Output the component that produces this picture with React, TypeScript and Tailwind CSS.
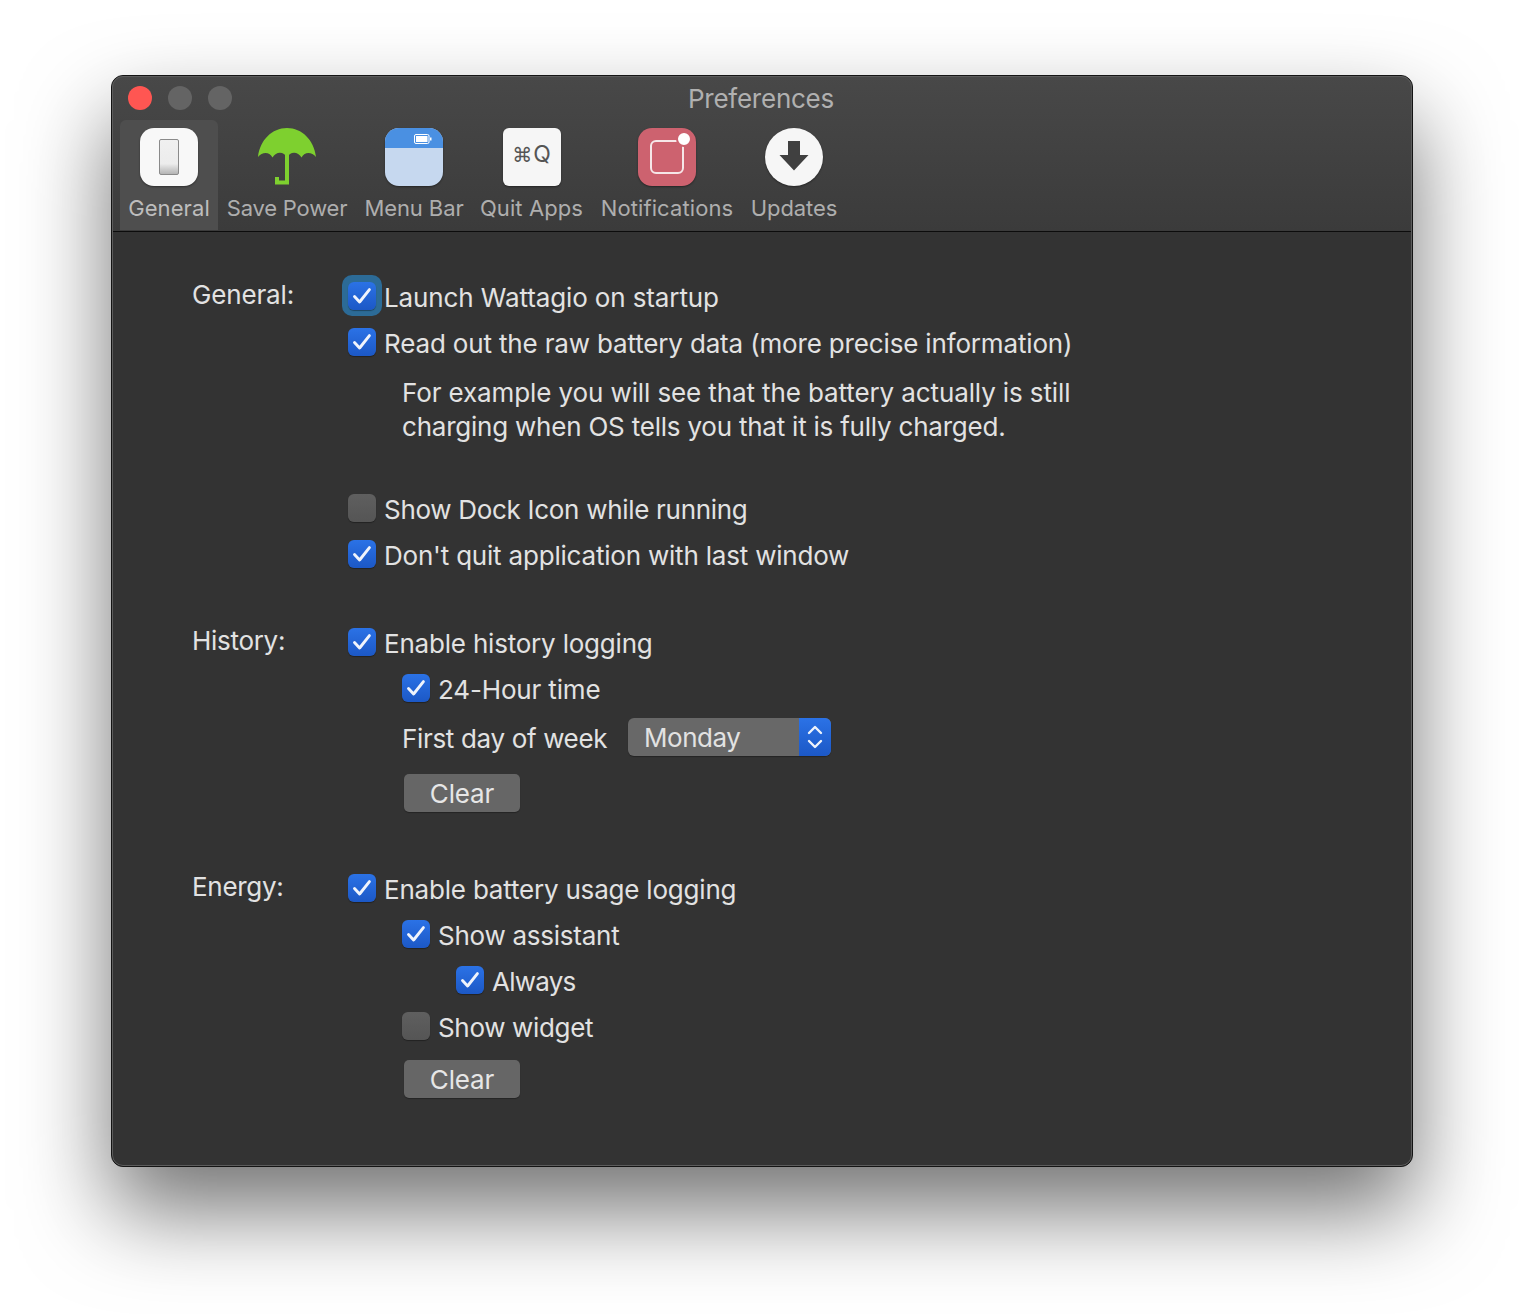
import React from "react";

const FONT = "font-['Inter','Liberation_Sans',sans-serif]";

function Check({ on, focus }: { on: boolean; focus?: boolean }) {
  return (
    <span className="relative mb-[2px] mr-2 block h-7 w-7 shrink-0">
      {focus && <span className="absolute -left-1.5 -top-[7px] h-[41px] w-10 rounded-[10px] bg-[#2c6b97]" />}
      {on ? (
        <span className="absolute inset-0 rounded-md bg-gradient-to-b from-[#2b72e6] to-[#1c58c6] shadow-[0_1px_1px_rgba(0,0,0,0.35)]">
          <svg viewBox="0 0 28 28" className="h-7 w-7" fill="none" stroke="#f0f4fc" strokeWidth="2.9" strokeLinecap="round" strokeLinejoin="round">
            <path d="M6.5 14.6 L11.6 20 L21.4 7.6" />
          </svg>
        </span>
      ) : (
        <span className="absolute inset-0 rounded-md bg-gradient-to-b from-[#5f5f5f] to-[#555555] shadow-[0_1px_1px_rgba(0,0,0,0.35)]" />
      )}
    </span>
  );
}

function Row({ text, on = true, level = 0, focus, track = "" }: { text: string; on?: boolean; level?: 0 | 1 | 2; focus?: boolean; track?: string }) {
  const indent = level === 0 ? "ml-0" : level === 1 ? "ml-[54px]" : "ml-[108px]";
  return (
    <div className={`flex h-[46px] items-center ${indent}`}>
      <Check on={on} focus={focus} />
      <span className={`relative whitespace-nowrap ${track}`}>{text}</span>
    </div>
  );
}

function GeneralIcon() {
  return (
    <div className="flex h-[58px] w-[58px] items-center justify-center rounded-[14px] bg-[#f8f8f8] shadow-[0_1px_2px_rgba(0,0,0,0.4)]">
      <div className="h-[36px] w-[20px] rounded-[2px] border border-[#8a8a8a] bg-gradient-to-b from-[#f0f0f0] from-0% via-[#ececec] via-70% to-[#b4b4b4] to-100%" />
    </div>
  );
}

function UmbrellaIcon() {
  return (
    <svg viewBox="0 0 58 58" className="h-[58px] w-[58px]">
      <path
        fill="#7ed02f"
        d="M0 29 C2 12 14 0 29 0 C44 0 56 12 58 29 C54 24 47 23 43.5 29.5 C40 23 32 23 29 29.5 C26 23 18 23 14.5 29.5 C11 23 4 24 0 29 Z"
      />
      <path fill="none" stroke="#7ed02f" strokeWidth="4" d="M29 26 V54.5 H19 V49" />
    </svg>
  );
}

function MenuBarIcon() {
  return (
    <div className="relative h-[58px] w-[58px] overflow-hidden rounded-[14px] bg-[#c6d8ef] shadow-[0_1px_2px_rgba(0,0,0,0.4)]">
      <div className="flex h-[20px] items-start justify-end bg-[#4a90e2] pr-[11px] pt-[6px]">
        <svg viewBox="0 0 18 10" className="h-[10px] w-[18px]">
          <rect x="0.5" y="0.5" width="14.5" height="9" rx="1.5" fill="none" stroke="#fff" />
          <rect x="2" y="2" width="11.5" height="6" fill="#fff" />
          <rect x="16" y="3.5" width="1.5" height="3" fill="#fff" />
        </svg>
      </div>
    </div>
  );
}

function QuitIcon() {
  return (
    <div className="flex h-[58px] w-[58px] items-center justify-center rounded-[6px] bg-[#f6f6f6] text-[23px] leading-none text-[#555555] shadow-[0_1px_2px_rgba(0,0,0,0.4)]">
      <span className="-mt-[6px] whitespace-nowrap">
        <span className="font-['DejaVu_Sans',sans-serif] text-[20px]">⌘</span>
        <span className="ml-[1px] font-['Inter',sans-serif]">Q</span>
      </span>
    </div>
  );
}

function NotifIcon() {
  return (
    <div className="relative h-[58px] w-[58px] rounded-[14px] bg-[#cd626f] shadow-[0_1px_2px_rgba(0,0,0,0.4)]">
      <div className="absolute left-[12px] top-[12px] h-[34px] w-[34px] rounded-[6px] border-2 border-[#f6e6e8]" />
      <div className="absolute left-[38px] top-[3px] h-4 w-4 rounded-full border-2 border-[#cd626f] bg-white" />
    </div>
  );
}

function UpdatesIcon() {
  return (
    <div className="h-[58px] w-[58px] rounded-full bg-[#f6f6f6] shadow-[0_1px_2px_rgba(0,0,0,0.4)]">
      <svg viewBox="0 0 58 58" className="h-[58px] w-[58px]">
        <path fill="#404040" d="M23 13 H35 V27 H43.5 L29 42.5 L14.5 27 H23 Z" />
      </svg>
    </div>
  );
}

function Tool({ label, icon, active, width, track = "" }: { label: string; icon: React.ReactNode; active?: boolean; width: string; track?: string }) {
  return (
    <div className={`flex h-[110px] flex-col items-center rounded-t-[6px] pt-2 ${width} ${active ? "bg-[#4e4e4e]" : ""}`}>
      {icon}
      <span className={`mt-[4px] whitespace-nowrap text-[22px] leading-[36px] ${track} ${active ? "text-[#bdbdbd]" : "text-[#aeaeae]"}`}>{label}</span>
    </div>
  );
}

function Clear() {
  return (
    <button className="flex h-[38px] w-[116px] items-center justify-center rounded-[5px] bg-[#666666] text-[26px] text-[#e6e6e6] shadow-[0_1px_1px_rgba(0,0,0,0.3)]">
      Clear
    </button>
  );
}

export default function App() {
  return (
    <div className={`h-[1314px] w-full overflow-hidden bg-white pt-[75px] tracking-[-0.16px] ${FONT}`}>
      <div className="relative mx-auto flex h-[1092px] w-[1302px] flex-col overflow-hidden rounded-[12px] border border-[#141414] bg-[#333333] shadow-[0_44px_88px_rgba(0,0,0,0.55)]">
        <div className="relative h-[156px] shrink-0 border-b border-[#0c0c0c] bg-gradient-to-b from-[#484848] to-[#3b3b3b] tracking-normal">
          <div className="flex gap-4 pl-4 pt-[10px]">
            <span className="h-6 w-6 rounded-full bg-[#ff5652]" />
            <span className="h-6 w-6 rounded-full bg-[#646464]" />
            <span className="h-6 w-6 rounded-full bg-[#646464]" />
          </div>
          <div className="absolute left-0 right-0 top-[3px] pr-[2px] text-center text-[26px] leading-[40px] tracking-[-0.25px] text-[#b0b0b0]">Preferences</div>
          <div className="mt-[10px] flex pl-2">
            <Tool active width="w-[98px]" track="tracking-[0.1px]" label="General" icon={<GeneralIcon />} />
            <Tool width="w-[138px]" track="tracking-[-0.2px]" label="Save Power" icon={<UmbrellaIcon />} />
            <Tool width="w-[116px]" track="tracking-[-0.1px]" label="Menu Bar" icon={<MenuBarIcon />} />
            <Tool width="w-[119px]" track="tracking-[0.1px]" label="Quit Apps" icon={<QuitIcon />} />
            <Tool width="w-[152px]" track="tracking-[0.1px]" label="Notifications" icon={<NotifIcon />} />
            <Tool width="w-[102px]" track="tracking-[-0.1px]" label="Updates" icon={<UpdatesIcon />} />
          </div>
        </div>

        <div className="flex-1 pl-[80px] pt-[42px] text-[26px] text-[#e2e2e2]">
          <section className="flex">
            <div className="h-[42px] w-[156px] leading-[42px]">General:</div>
            <div>
              <Row focus text="Launch Wattagio on startup" track="tracking-[-0.12px]" />
              <Row text="Read out the raw battery data (more precise information)" />
              <p className="ml-[54px] mt-[10px] whitespace-nowrap leading-[34px]">
                <span className="block tracking-[-0.11px]">For example you will see that the battery actually is still</span>
                <span className="block tracking-[-0.22px]">charging when OS tells you that it is fully charged.</span>
              </p>
              <div className="mt-[42px]">
                <Row on={false} text="Show Dock Icon while running" track="tracking-[-0.3px]" />
                <Row text="Don't quit application with last window" track="tracking-[-0.2px]" />
              </div>
            </div>
          </section>

          <section className="mt-[42px] flex">
            <div className="h-[42px] w-[156px] leading-[42px] tracking-[-0.3px]">History:</div>
            <div>
              <Row text="Enable history logging" track="tracking-[-0.2px]" />
              <Row level={1} text="24-Hour time" />
              <div className="ml-[54px] mt-[6px] flex h-[38px] items-center">
                <span className="mt-[2px] w-[226px] whitespace-nowrap tracking-[-0.34px]">First day of week</span>
                <div className="flex h-[38px] w-[203px] overflow-hidden rounded-[6px] bg-[#686868] shadow-[0_1px_1px_rgba(0,0,0,0.3)]">
                  <span className="flex-1 pl-4 leading-[40px] tracking-[-0.45px]">Monday</span>
                  <span className="flex w-8 items-center justify-center bg-gradient-to-b from-[#2b72e6] to-[#1c58c6]">
                    <svg viewBox="0 0 32 38" className="h-[38px] w-8" fill="none" stroke="#eef3fb" strokeWidth="2.4" strokeLinecap="round" strokeLinejoin="round">
                      <path d="M10 15 L16 9 L22 15 M10 23 L16 29 L22 23" />
                    </svg>
                  </span>
                </div>
              </div>
              <div className="ml-14 mt-[18px]">
                <Clear />
              </div>
            </div>
          </section>

          <section className="mt-[54px] flex">
            <div className="h-[42px] w-[156px] leading-[42px] tracking-[-0.3px]">Energy:</div>
            <div>
              <Row text="Enable battery usage logging" track="tracking-[-0.2px]" />
              <Row level={1} text="Show assistant" track="tracking-[-0.25px]" />
              <Row level={2} text="Always" track="tracking-[-0.75px]" />
              <Row level={1} on={false} text="Show widget" track="tracking-[-0.34px]" />
              <div className="ml-14 mt-[10px]">
                <Clear />
              </div>
            </div>
          </section>
        </div>
        <div className="pointer-events-none absolute inset-0 rounded-[11px] border border-[#5c5c5c]" />
      </div>
    </div>
  );
}
